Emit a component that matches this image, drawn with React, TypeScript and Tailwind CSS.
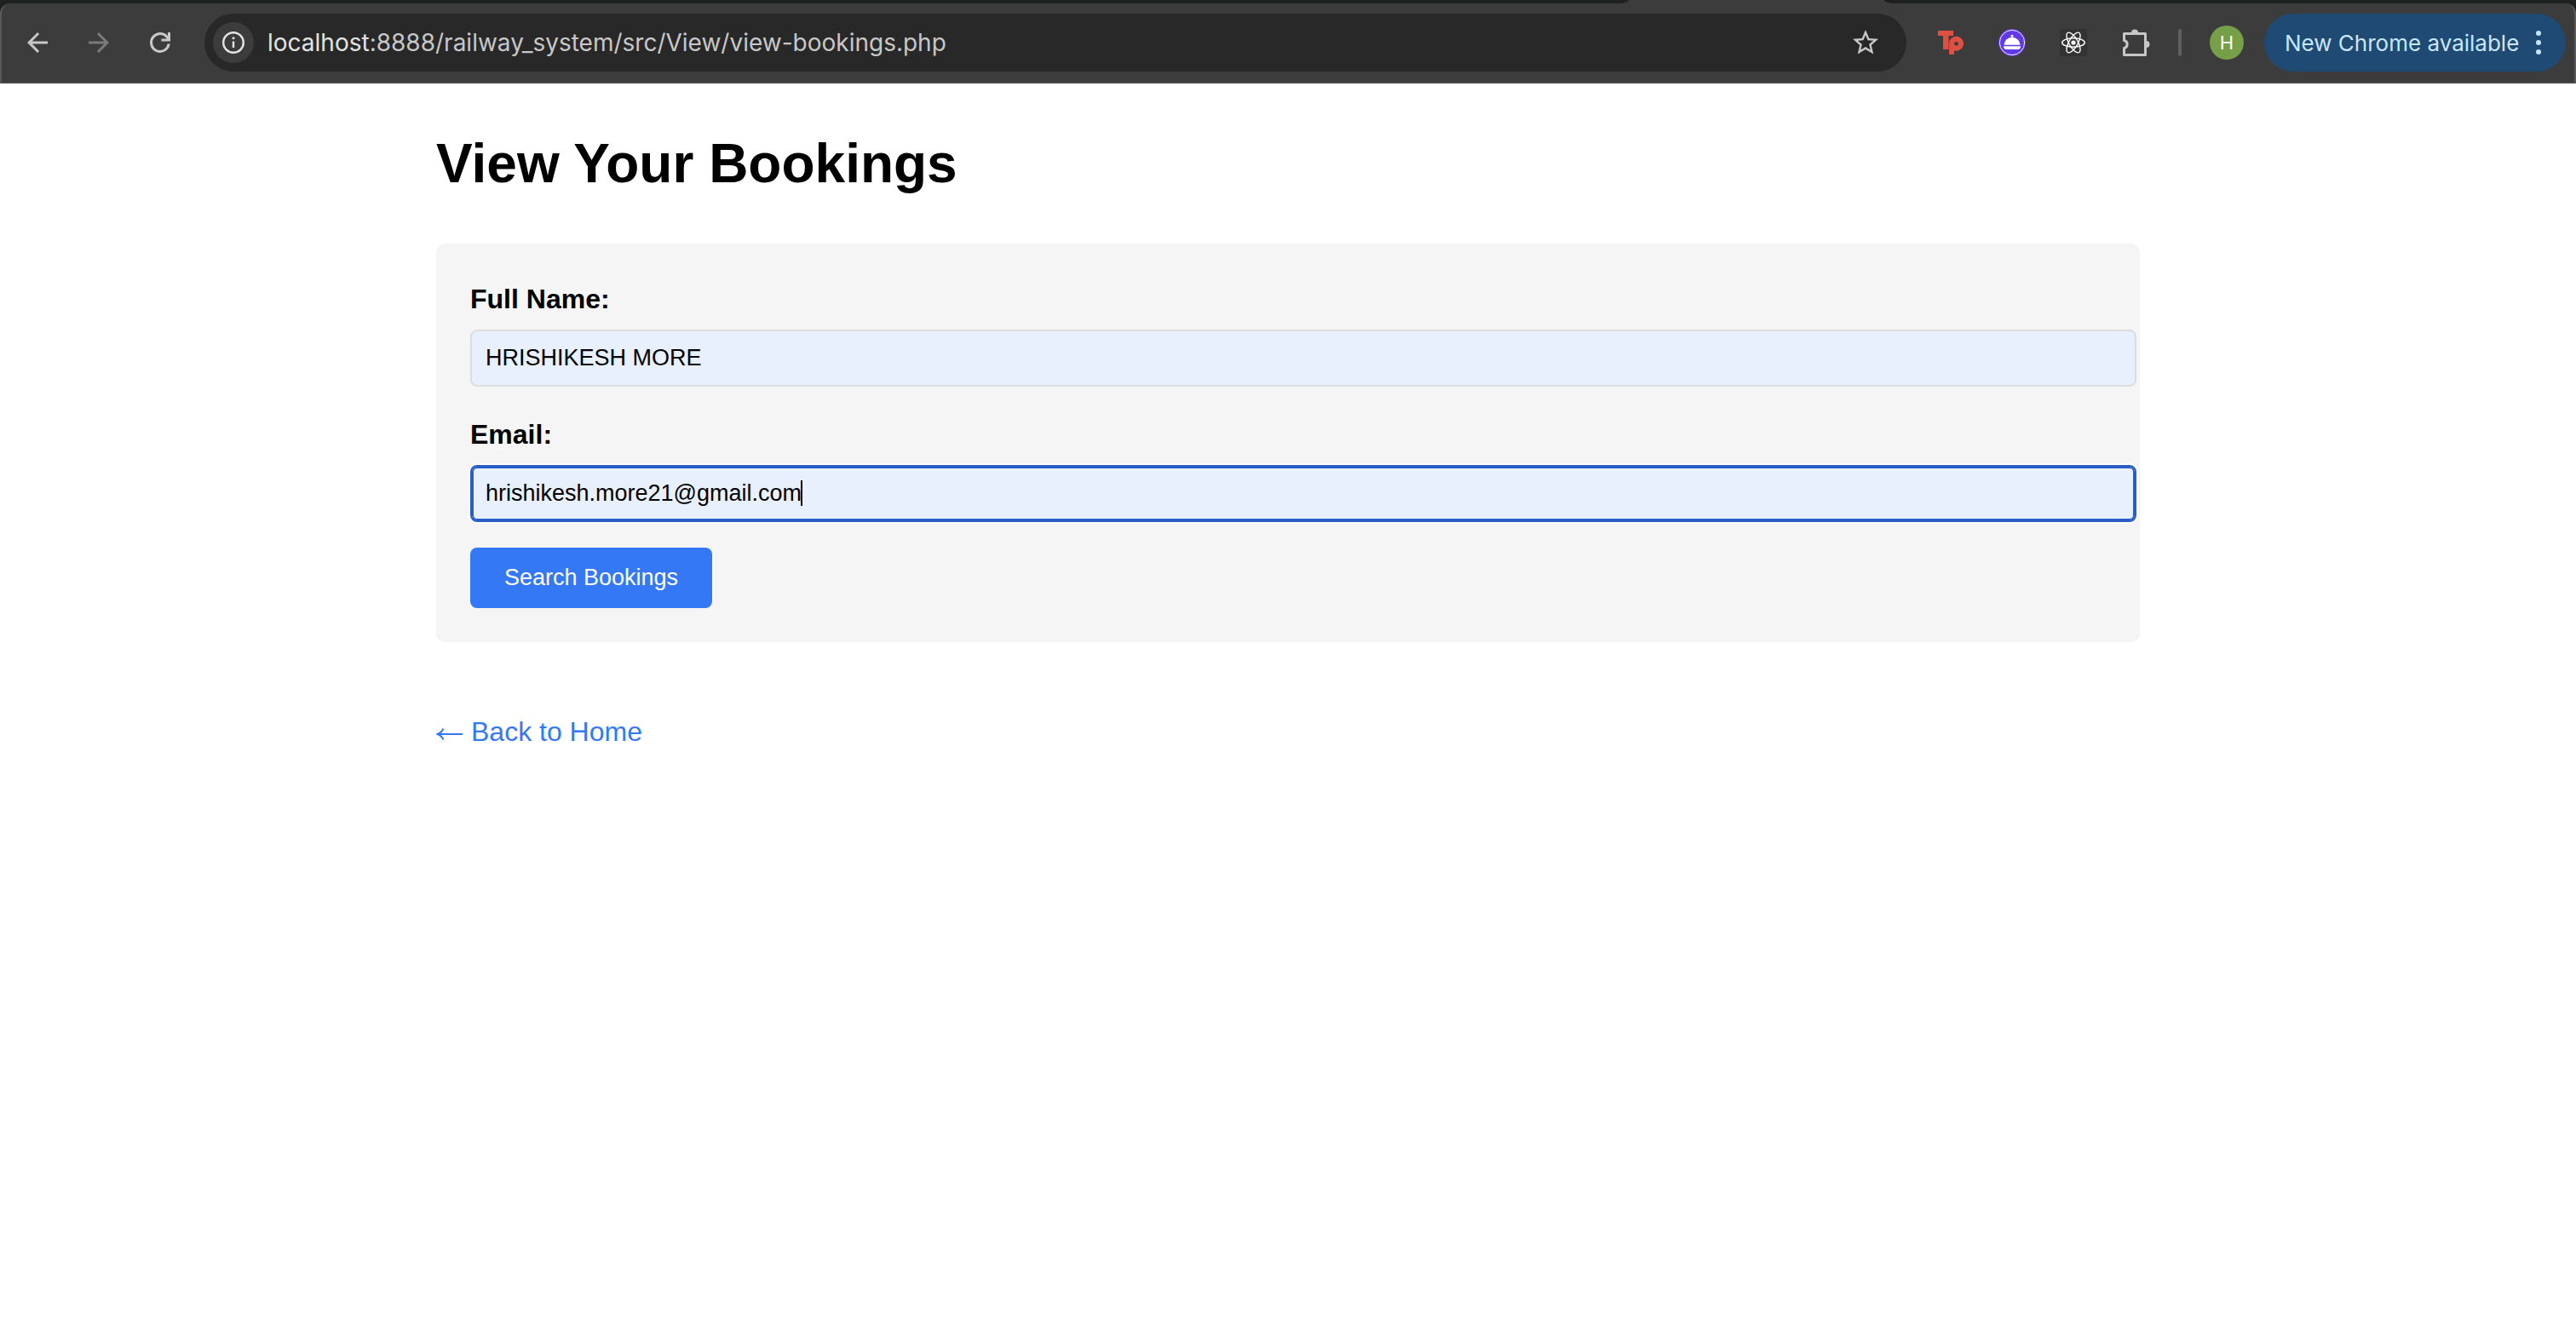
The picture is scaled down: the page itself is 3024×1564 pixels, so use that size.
import { useState } from "react";

function ArrowIcon({ flip = false }: { flip?: boolean }) {
  return (
    <svg viewBox="0 0 24 24" className={flip ? "size-9 rotate-180" : "size-9"} fill="currentColor" aria-hidden="true">
      <path d="M20 11H7.83l5.59-5.59L12 4l-8 8 8 8 1.41-1.41L7.83 13H20v-2z" />
    </svg>
  );
}

function ReloadIcon() {
  return (
    <svg viewBox="0 0 24 24" className="size-9" fill="currentColor" aria-hidden="true">
      <path d="M12 20q-3.35 0-5.67-2.33T4 12q0-3.35 2.33-5.67T12 4q1.73 0 3.3.71T18 6.75V4h2v7h-7V9h4.2q-.8-1.4-2.19-2.2T12 6Q9.5 6 7.75 7.75T6 12t1.75 4.25T12 18q1.93 0 3.48-1.1T17.8 13h2.1q-.5 3.1-2.75 5.05T12 20z" />
    </svg>
  );
}

function InfoIcon() {
  return (
    <svg viewBox="0 0 26 26" className="size-[26px]" fill="none" stroke="currentColor" aria-hidden="true">
      <circle cx="13" cy="13" r="11.8" strokeWidth="2.4" />
      <path d="M13 11.5V19" strokeWidth="2.4" />
      <circle cx="13" cy="7.8" r="1.5" fill="currentColor" stroke="none" />
    </svg>
  );
}

function StarIcon() {
  return (
    <svg viewBox="0 0 24 24" className="size-9" fill="currentColor" aria-hidden="true">
      <path d="M22 9.24l-7.19-.62L12 2 9.19 8.63 2 9.24l5.46 4.73L5.82 21 12 17.27 18.18 21l-1.63-7.03L22 9.24zM12 15.4l-3.76 2.27 1-4.28-3.32-2.88 4.38-.38L12 6.1l1.71 4.04 4.38.38-3.32 2.88 1 4.28L12 15.4z" />
    </svg>
  );
}

function TpIcon() {
  return (
    <svg viewBox="0 0 32 32" className="size-8" aria-hidden="true">
      <path d="M1 2h18v6h-5.500v16H7V8H1z" fill="#e04f44" />
      <path d="M14 30V17a8.500 8.500 0 1 1 6 8.400V30z" fill="#e04f44" />
      <path d="M13.700 12V24" stroke="#9a463f" strokeWidth="0.8" />
      <circle cx="22.500" cy="17.300" r="2.400" fill="#3c3c3c" />
    </svg>
  );
}

function ClocheIcon() {
  return (
    <svg viewBox="0 0 32 32" className="size-8" aria-hidden="true">
      <circle cx="16" cy="16" r="16" fill="#6239e6" />
      <circle cx="16" cy="16" r="14.600" fill="none" stroke="#fff" strokeWidth="0.9" />
      <circle cx="16" cy="8.200" r="1.500" fill="#fff" />
      <path d="M6.500 18.800a9.500 9 0 0 1 19 0z" fill="#fff" />
      <path d="M6 20.300h20q0 3.700-3 3.700H9q-3 0-3-3.700z" fill="#fff" />
    </svg>
  );
}

function AtomIcon() {
  return (
    <svg viewBox="0 0 32 32" className="size-8" fill="none" stroke="#fff" strokeWidth="1.4" aria-hidden="true">
      <rect width="32" height="32" rx="2" fill="#333" stroke="none" />
      <ellipse cx="16" cy="16" rx="13.300" ry="5.200" />
      <ellipse cx="16" cy="16" rx="13.300" ry="5.200" transform="rotate(60 16 16)" />
      <ellipse cx="16" cy="16" rx="13.300" ry="5.200" transform="rotate(120 16 16)" />
      <circle cx="16" cy="16" r="2.600" fill="#fff" stroke="none" />
    </svg>
  );
}

function PuzzleIcon() {
  return (
    <svg viewBox="0 0 32 32" className="size-8" aria-hidden="true">
      <path d="M1.500 5.500H26.500V30.500H1.500V22.500A4.600 4.600 0 0 0 1.500 13.500Z" fill="none" stroke="#c7c7c7" strokeWidth="3" strokeLinejoin="round" />
      <path d="M10 4.500a4 4 0 0 1 8 0zM27.500 14a4 4 0 0 1 0 8z" fill="#c7c7c7" />
    </svg>
  );
}

function BrowserBar() {
  return (
    <header className="bg-[#1f2120] font-[Inter,sans-serif]">
      <div className="flex h-1 bg-[#3c3c3c]">
        <div className="flex-1 rounded-br-[12px_4px] bg-[#1f2120]" />
        <div className="w-[300px]" />
        <div className="w-[812px] rounded-bl-[12px_4px] bg-[#1f2120]" />
      </div>
      <div className="flex h-[94px] items-center rounded-t-xl border-x-2 border-b-2 border-x-[#5a5a5a] border-b-[#464646] bg-[#3c3c3c] pr-2.5 pl-6 text-[#c7c7c7]">
        <div className="flex gap-9">
          <button type="button" aria-label="Back"><ArrowIcon /></button>
          <button type="button" aria-label="Forward" className="text-[#7b7b7b]"><ArrowIcon flip /></button>
          <button type="button" aria-label="Reload"><ReloadIcon /></button>
        </div>
        <div className="ml-[34px] flex h-[68px] flex-1 items-center rounded-full bg-[#282828] pr-[30px] pl-2.5">
          <button type="button" aria-label="Site information" className="flex size-12 items-center justify-center rounded-full bg-[#3c3c3c] text-[#e3e3e3]">
            <InfoIcon />
          </button>
          <p className="ml-4 flex-1 text-[28px] leading-9">
            <span className="text-[#e3e3e3]">localhost</span>:8888/railway_system/src/View/view-bookings.php
          </p>
          <button type="button" aria-label="Bookmark this tab"><StarIcon /></button>
        </div>
        <div className="mr-[42px] ml-9 flex items-center gap-10">
          <button type="button" aria-label="Tp extension"><TpIcon /></button>
          <button type="button" aria-label="Cloche extension"><ClocheIcon /></button>
          <button type="button" aria-label="React Developer Tools"><AtomIcon /></button>
        </div>
        <button type="button" aria-label="Extensions"><PuzzleIcon /></button>
        <div className="mx-[33px] h-8 w-1 rounded-full bg-[#5f5f5f]" />
        <button type="button" aria-label="Profile" className="flex size-10 items-center justify-center rounded-full bg-[#759f48] text-[22px] text-white">
          H
        </button>
        <button type="button" className="ml-6 flex h-[68px] w-[354px] items-center justify-between rounded-full bg-[#1f4a73] pr-[29px] pl-6 text-[26px] text-[#c8e6ff]">
          New Chrome available
          <svg viewBox="0 0 6 28" className="h-7 w-1.5" fill="currentColor" aria-hidden="true">
            <circle cx="3" cy="3" r="3" />
            <circle cx="3" cy="14" r="3" />
            <circle cx="3" cy="25" r="3" />
          </svg>
        </button>
      </div>
    </header>
  );
}

export default function App() {
  const [name, setName] = useState("HRISHIKESH MORE");
  const [email, setEmail] = useState("hrishikesh.more21@gmail.com");

  return (
    <div className="min-h-screen bg-white font-['Liberation_Sans',Arial,sans-serif] text-[32px] leading-[51px] text-black">
      <BrowserBar />
      <main className="mx-auto max-w-[2000px] pt-[43px]">
        <h1 className="mb-[43px] text-[64px] leading-[102px] font-bold">View Your Bookings</h1>
        <form className="rounded-[10px] bg-[#f5f5f5] p-10" onSubmit={(e) => e.preventDefault()}>
          <div className="mb-[31px]">
            <label htmlFor="name" className="mb-2.5 block font-bold">Full Name:</label>
            <input
              id="name"
              type="text"
              value={name}
              onChange={(e) => setName(e.target.value)}
              className="box-content block h-[31px] w-full rounded-lg border-2 border-[#ddd] bg-[#e8effd] px-4 py-4 text-[27px] leading-[31px] outline-none"
            />
          </div>
          <div className="mb-[30px]">
            <label htmlFor="email" className="mb-2.5 block font-bold">Email:</label>
            <div className="relative">
              <input
                id="email"
                type="email"
                value={email}
                onChange={(e) => setEmail(e.target.value)}
                className="box-content block h-[31px] w-full rounded-lg border-2 border-[#285ec6] bg-[#e8effd] px-4 py-4 text-[27px] leading-[31px] shadow-[inset_0_0_0_2px_#285ec6,0_0_0_2px_#fff] outline-none"
              />
              <span className="absolute top-[18px] left-[388px] h-[30px] w-0.5 bg-black" />
            </div>
          </div>
          <button type="submit" className="block h-[71px] rounded-lg bg-[#3578f6] px-10 text-[27px] leading-[31px] text-white">
            Search Bookings
          </button>
        </form>
        <a href="#home" className="mt-20 inline-flex items-center gap-[9px] text-[#3578f6]">
          <svg viewBox="0 0 32 16" className="mt-1 h-4 w-8" fill="none" stroke="currentColor" strokeWidth="2" aria-hidden="true">
            <path d="M2 8H31" />
            <path d="M8.500 1.500Q6.500 6 1.500 8Q6.500 10 8.500 14.500" />
          </svg>
          Back to Home
        </a>
      </main>
    </div>
  );
}
